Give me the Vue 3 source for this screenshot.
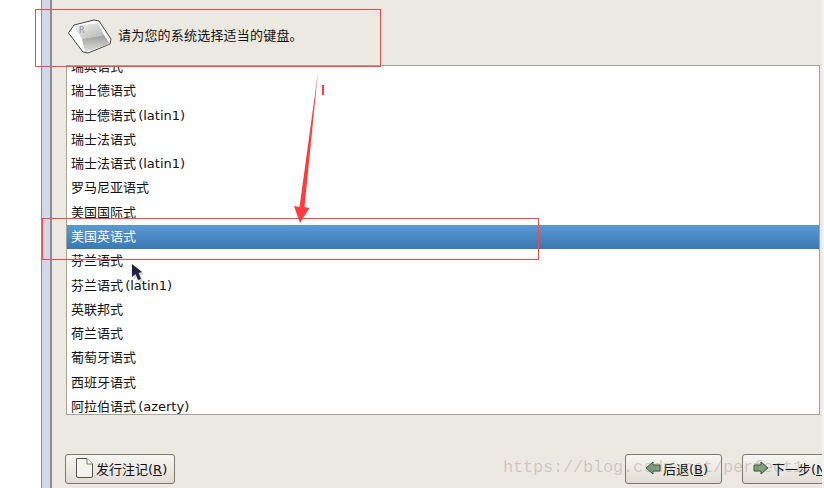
<template>
  <div class="page">
    <div class="gutter"></div>
    <div class="sidebar"></div>

    <div class="main">
      <!-- 顶部提示 -->
      <div class="header">
        <svg class="key-icon" width="48" height="36" viewBox="0 0 48 36">
          <defs>
            <linearGradient id="keyTop" x1="0" y1="0" x2="1" y2="1">
              <stop offset="0" stop-color="#f4f4f4" />
              <stop offset="1" stop-color="#b4b4b2" />
            </linearGradient>
            <linearGradient id="keyFront" x1="0" y1="0" x2="0" y2="1">
              <stop offset="0" stop-color="#9c9c9a" />
              <stop offset="1" stop-color="#dededc" />
            </linearGradient>
          </defs>
          <path d="M1.5 15 L7 7 L27 2 L32 3 L44 21 L43 26 L21 35 L16 34 Z" fill="#fff" stroke="#45433f" stroke-width="1" stroke-linejoin="round" />
          <path d="M7 8 L31 5 L37 17 L15 21 Z" fill="url(#keyTop)" />
          <path d="M15 21 L37 17 L43 26 L18 34 Z" fill="url(#keyFront)" />
          <text x="12" y="15" class="key-letter">R</text>
        </svg>
        <span class="prompt">请为您的系统选择适当的键盘。</span>
      </div>

      <!-- 键盘列表 -->
      <div class="list">
        <div class="rows">
          <div
            v-for="name in layouts"
            :key="name"
            class="row"
            :class="{ selected: name === selected }"
          >
            {{ name }}
          </div>
        </div>
      </div>

      <!-- 底部按钮 -->
      <div class="footer">
        <button class="btn notes">
          <svg width="20" height="22" viewBox="0 0 20 22">
            <path d="M2.5 1.5 H13 L18.5 7 V19 q0 1.5 -1.5 1.5 H4 q-1.5 0 -1.5 -1.5 Z" fill="#f4f3ef" stroke="#55534e" stroke-width="1" />
            <path d="M13 1.5 V7 H18.5" fill="#fff" stroke="#77746c" stroke-width="1" />
          </svg>
          <span>发行注记(<u>R</u>)</span>
        </button>
        <div class="nav">
          <button class="btn back">
            <svg width="16" height="14" viewBox="0 0 16 14">
              <path d="M1 7 L8 1 V4 H15 V10 H8 V13 Z" fill="#7fa37c" stroke="#3f4f3d" stroke-width="1" stroke-linejoin="round" />
            </svg>
            <span>后退(<u>B</u>)</span>
          </button>
          <button class="btn next">
            <svg width="16" height="14" viewBox="0 0 16 14">
              <path d="M15 7 L8 1 V4 H1 V10 H8 V13 Z" fill="#7fa37c" stroke="#3f4f3d" stroke-width="1" stroke-linejoin="round" />
            </svg>
            <span>下一步(<u>N</u>)</span>
          </button>
        </div>
      </div>
    </div>
    <div class="edge"></div>

    <!-- 截图上的红色标注 -->
    <svg class="marks" width="824" height="488" viewBox="0 0 824 488">
      <rect x="35.5" y="9.5" width="345" height="57" fill="none" stroke="#f44" stroke-width="1" />
      <rect x="42.5" y="218.5" width="496" height="41" fill="none" stroke="#f44" stroke-width="1" />
      <path d="M318 72 L304.5 207 L309.5 208 L300 223 L294 206 L299.5 207 Z" fill="#ff3c3c" />
      <rect x="322" y="85" width="2" height="10" fill="#ff3c3c" />
      <path d="M134 266 L134 279 L137.500 276 L140 282 L143 281 L140.500 275 L144 274 Z" fill="#9a9a9a" opacity="0.45" />
      <path d="M132 264 L132 277 L135.500 274 L138 280 L141 279 L138.500 273 L142 272 Z" fill="#1c2340" />
    </svg>

    <div class="watermark">https://blog.csdn.net/perfect1</div>
  </div>
</template>

<script setup>
const selected = '美国英语式'

const layouts = [
  '瑞典语式',
  '瑞士德语式',
  '瑞士德语式 (latin1)',
  '瑞士法语式',
  '瑞士法语式 (latin1)',
  '罗马尼亚语式',
  '美国国际式',
  '美国英语式',
  '芬兰语式',
  '芬兰语式 (latin1)',
  '英联邦式',
  '荷兰语式',
  '葡萄牙语式',
  '西班牙语式',
  '阿拉伯语式 (azerty)',
  '阿拉伯语式 (qwerty)'
]
</script>

<style>
html,
body {
  margin: 0;
  background: #fff;
}
</style>

<style scoped>
.page {
  position: relative;
  display: flex;
  width: 824px;
  height: 488px;
  overflow: hidden;
  font-family: "DejaVu Sans", "Noto Sans CJK SC", sans-serif;
  font-size: 13px;
  color: #111;
}

.gutter {
  width: 41px;
  flex: none;
  background: #fff;
}

.sidebar {
  width: 8px;
  flex: none;
  background: #d1d8ec;
  border-left: 1px solid #8e8e9c;
  border-right: 2px solid #8f8d8a;
}

.main {
  flex: 1;
  display: flex;
  flex-direction: column;
  min-width: 0;
  overflow: hidden;
  padding-left: 14px;
  padding-right: 2px;
  background: #ece9e2;
}

.edge {
  width: 2px;
  flex: none;
  background: #f3f2ee;
}

.header {
  height: 65px;
  flex: none;
  display: flex;
  align-items: center;
  gap: 3px;
  padding: 6px 0 0 1px;
  box-sizing: border-box;
}

.key-icon {
  flex: none;
}

.key-letter {
  font-size: 8px;
  font-family: "DejaVu Sans", sans-serif;
  fill: #8a8a88;
}

.prompt {
  margin-top: 1px;
  line-height: 16px;
  letter-spacing: 0.2px;
}

.list {
  height: 350px;
  flex: none;
  box-sizing: border-box;
  overflow: hidden;
  background: #fff;
  border: 1px solid #a9a392;
}

.rows {
  margin-top: -11.1px;
}

.row {
  height: 24.3px;
  line-height: 24px;
  padding-left: 4px;
  white-space: nowrap;
  word-spacing: -2px;
}

.row.selected {
  color: #fff;
  background: linear-gradient(#5a9ad4, #3a78b4);
}

.footer {
  flex: 1;
  display: flex;
  justify-content: space-between;
  padding: 39px 0 0 0;
  margin-left: -1px;
  margin-right: -2px;
}

.nav {
  display: flex;
  gap: 20px;
  margin-right: -28px;
}

.btn {
  display: flex;
  align-items: center;
  height: 30px;
  padding: 0 0 2px;
  box-sizing: border-box;
  border: 1px solid #7d786c;
  border-radius: 3px;
  background: linear-gradient(#f7f5f1, #e2ded6);
  font: inherit;
  color: #111;
}

.notes {
  width: 110px;
  padding-left: 8px;
  gap: 2px;
}

.back {
  width: 97px;
  padding-left: 19px;
  gap: 2px;
}

.next {
  width: 108px;
  padding-left: 10px;
  gap: 3px;
}

.marks {
  position: absolute;
  left: 0;
  top: 0;
  pointer-events: none;
}

.watermark {
  position: absolute;
  left: 503px;
  top: 458px;
  font-family: "Liberation Mono", monospace;
  font-size: 17px;
  line-height: 20px;
  letter-spacing: -0.2px;
  color: rgba(110, 110, 110, 0.28);
  white-space: nowrap;
  pointer-events: none;
}
</style>
